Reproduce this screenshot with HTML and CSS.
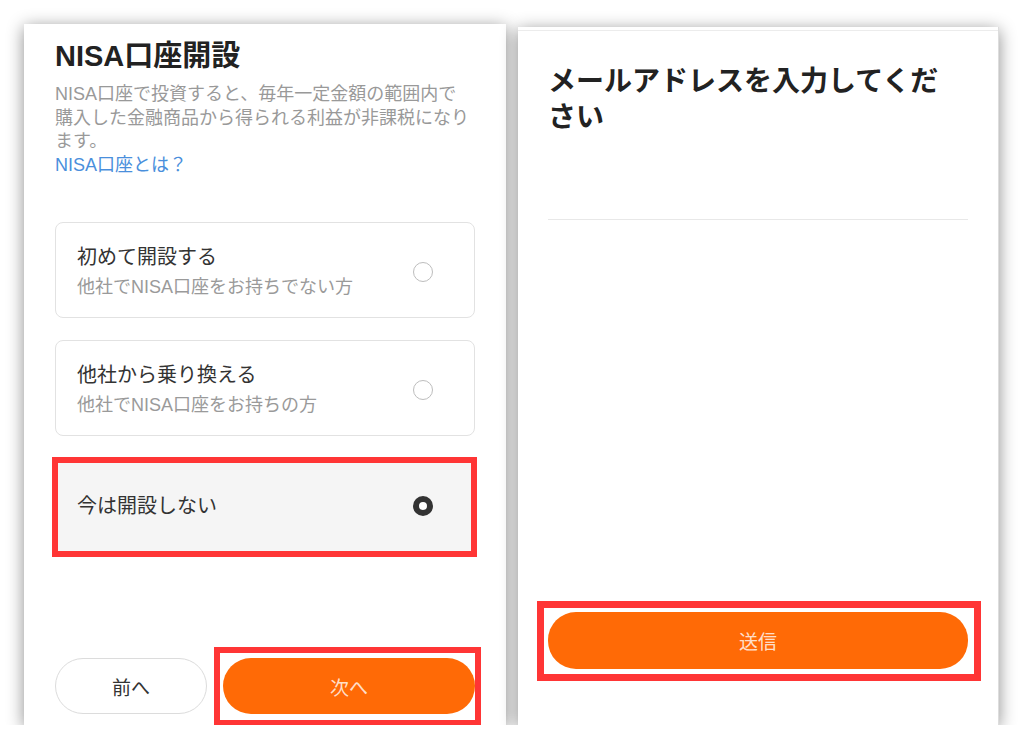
FILE: index.html
```html
<!DOCTYPE html>
<html lang="ja">
<head>
    <meta charset="UTF-8">
    <title>NISA口座開設</title>
    <link rel="stylesheet" href="styles.css">
</head>
<body>
    <div class="screens">
        <div class="panel nisa-panel">
            <h2 class="page-title">NISA口座開設</h2>
            <p class="lead">NISA口座で投資すると、毎年一定金額の範囲内で<br>購入した金融商品から得られる利益が非課税になり<br>ます。</p>
            <a class="lead-link" href="#">NISA口座とは？</a>

            <div class="options">
                <label class="option">
                    <div class="option-text">
                        <div class="option-title">初めて開設する</div>
                        <div class="option-sub">他社でNISA口座をお持ちでない方</div>
                    </div>
                    <span class="radio"></span>
                </label>
                <label class="option">
                    <div class="option-text">
                        <div class="option-title">他社から乗り換える</div>
                        <div class="option-sub">他社でNISA口座をお持ちの方</div>
                    </div>
                    <span class="radio"></span>
                </label>
                <label class="option selected">
                    <div class="option-text">
                        <div class="option-title">今は開設しない</div>
                    </div>
                    <span class="radio checked"></span>
                </label>
            </div>

            <div class="nav-buttons">
                <button class="btn btn-back">前へ</button>
                <button class="btn btn-primary btn-next">次へ</button>
            </div>
        </div>

        <div class="panel mail-panel">
            <div class="status-line"></div>
            <h2 class="mail-title">メールアドレスを入力してくだ<br>さい</h2>
            <input class="mail-input" type="email">
            <button class="btn btn-primary btn-send">送信</button>
        </div>
    </div>
</body>
</html>
```

FILE: styles.css
```css
body {
    margin: 0;
    background: #ffffff;
    font-family: "Liberation Sans", "Noto Sans CJK JP", sans-serif;
    color: #333333;
}
.screens {
    display: flex;
    gap: 12px;
    padding: 24px 0 0 24px;
}
.panel {
    background: #ffffff;
    box-shadow: 0 3px 16px rgba(0, 0, 0, 0.45);
    box-sizing: border-box;
    display: flex;
    flex-direction: column;
}
.nisa-panel {
    width: 482px;
    height: 701px;
    padding: 15px 31px 11px 31px;
}
.page-title {
    margin: 0;
    font-size: 29px;
    line-height: 34px;
    font-weight: 700;
    color: #222222;
}
.lead {
    margin: 10px 0 0 0;
    font-size: 18px;
    line-height: 23.5px;
    color: #999999;
}
.lead-link {
    font-size: 18px;
    line-height: 23.5px;
    color: #4a8fdc;
    text-decoration: none;
}
.options {
    margin-top: 45px;
    display: flex;
    flex-direction: column;
    gap: 22px;
}
.option {
    height: 96px;
    box-sizing: border-box;
    border: 1px solid #e2e2e2;
    border-radius: 8px;
    padding: 4px 41px 0 21px;
    display: flex;
    align-items: center;
    justify-content: space-between;
}
.option-title {
    font-size: 20px;
    line-height: 30px;
    color: #333333;
}
.option-sub {
    font-size: 18px;
    line-height: 30px;
    color: #9a9a9a;
}
.option.selected {
    background: #f5f5f5;
    padding-top: 0;
    position: relative;
}
.option.selected::after {
    content: "";
    position: absolute;
    top: -2px;
    bottom: -4px;
    left: -4px;
    right: -3px;
    border: 6px solid #ff3535;
}
.radio {
    width: 20px;
    height: 20px;
    box-sizing: border-box;
    border: 1.5px solid #bdbdbd;
    border-radius: 50%;
    background: #ffffff;
}
.radio.checked {
    border: 6px solid #333333;
}
.nav-buttons {
    margin-top: auto;
    display: flex;
    gap: 16px;
}
.btn {
    height: 56px;
    border-radius: 28px;
    font-family: inherit;
    font-size: 19px;
    cursor: pointer;
}
.btn-back {
    width: 152px;
    background: #ffffff;
    border: 1px solid #dcdcdc;
    color: #333333;
}
.btn-primary {
    background: #ff6a06;
    border: none;
    color: rgba(255, 255, 255, 0.8);
}
.btn-next {
    flex: 1;
    position: relative;
}
.btn-next::after {
    content: "";
    position: absolute;
    top: -11px;
    bottom: -12px;
    left: -9px;
    right: -6px;
    border: 6px solid #ff3535;
}
.mail-panel {
    width: 481px;
    height: 698px;
    margin-top: 3px;
    padding: 0 30px 56px 30px;
    border-right: 1px solid #dddddd;
}
.status-line {
    height: 3px;
    margin: 0 -30px;
    border-bottom: 1px solid #ececec;
}
.mail-title {
    margin: 33px 0 0 0;
    font-size: 28px;
    line-height: 36px;
    font-weight: 700;
    color: #222222;
}
.mail-input {
    margin-top: 31px;
    height: 50px;
    border: none;
    border-bottom: 1px solid #e8e8e8;
    outline: none;
    background: transparent;
    font-size: 18px;
}
.btn-send {
    margin-top: auto;
    height: 57px;
    position: relative;
}
.btn-send::after {
    content: "";
    position: absolute;
    top: -11px;
    bottom: -12px;
    left: -11px;
    right: -13px;
    border: 7px solid #ff3535;
}
```
